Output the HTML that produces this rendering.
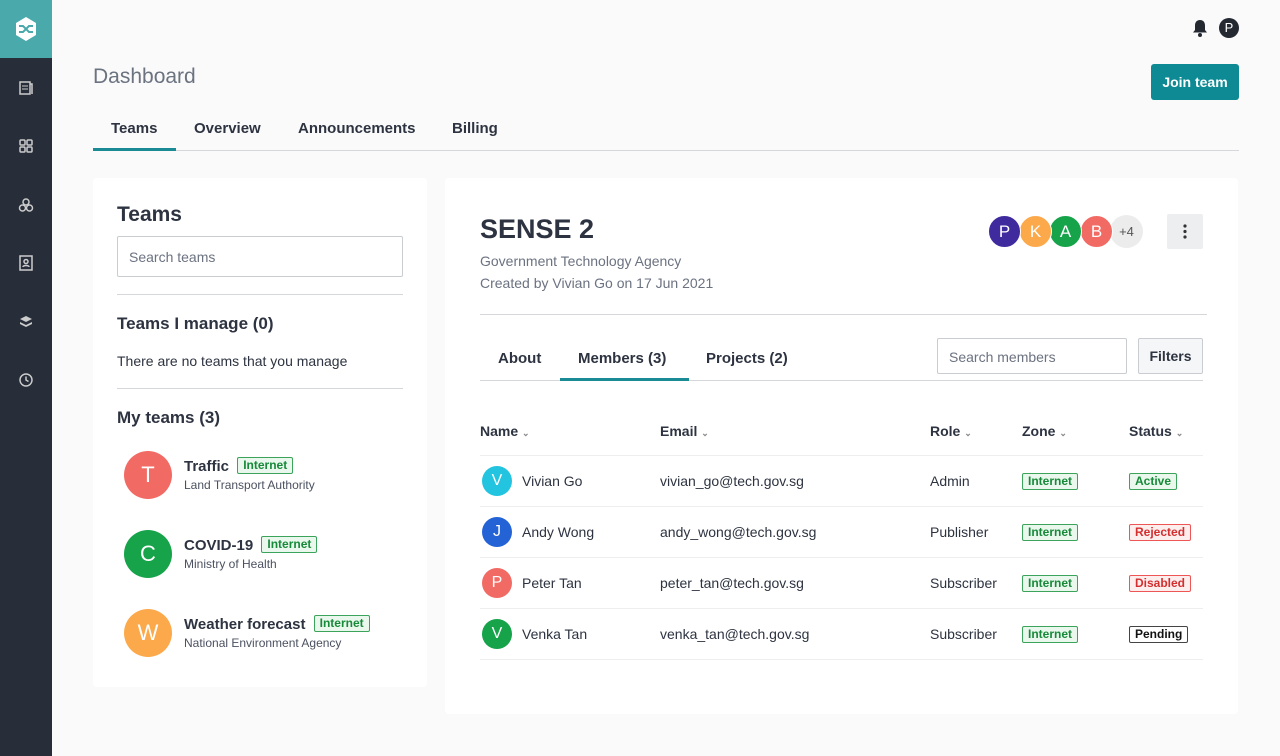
<!DOCTYPE html>
<html><head><meta charset="utf-8"><style>
*{box-sizing:border-box;margin:0;padding:0}
body{width:1280px;height:756px;background:#fafafa;font-family:"Liberation Sans",sans-serif;color:#2d3340;position:relative;overflow:hidden}
.abs{position:absolute}
.side{left:0;top:0;width:52px;height:756px;background:#272d39}
.logo{left:0;top:0;width:52px;height:58px;background:#4aa9ab}
.ic{left:17px;width:18px;height:18px}
.card{background:#fff;border-radius:4px}
.tag{display:inline-block;border:1px solid #3ba35a;background:#eaf7ec;color:#178a3a;font-size:12px;font-weight:bold;padding:0 5px;line-height:15px;border-radius:2px;vertical-align:2px}
.av{border-radius:50%;color:#fff;text-align:center}
.th{font-size:14px;font-weight:bold;color:#2d3340}
.row{position:absolute;left:480px;width:723px;height:51px;border-bottom:1px solid #eee}
.row span{position:absolute;top:17px;font-size:14px}
.row span.tag,.row span.st{font-size:12px;top:17px;vertical-align:0}
.st{font-size:12px;font-weight:bold;padding:0 5px;line-height:15px;border:1px solid;border-radius:2px}
</style></head><body>
<div class="abs side"></div>
<div class="abs logo"><svg width="52" height="58"><polygon points="26,17 36,23 36,35 26,41 16,35 16,23" fill="#fff"/><path d="M19 26h4l6 6h4M19 32h4l6-6h4" stroke="#4aa9ab" stroke-width="2" fill="none"/></svg></div>
<svg class="abs ic" style="top:79px" viewBox="0 0 18 18"><rect x="3" y="3" width="10" height="12" fill="none" stroke="#ccc" stroke-width="1.5"/><path d="M13 5h2v10" stroke="#ccc" stroke-width="1.5" fill="none"/><path d="M5 7h6M5 10h6" stroke="#ccc"/></svg>
<svg class="abs ic" style="top:137px" viewBox="0 0 18 18"><g fill="none" stroke="#ccc" stroke-width="1.5"><rect x="3" y="3" width="5" height="5" rx="1"/><rect x="10" y="3" width="5" height="5" rx="1"/><rect x="3" y="10" width="5" height="5" rx="1"/><rect x="10" y="10" width="5" height="5" rx="1"/></g></svg>
<svg class="abs ic" style="top:196px" viewBox="0 0 18 18"><g fill="none" stroke="#ccc" stroke-width="1.5"><circle cx="9" cy="6" r="3"/><circle cx="5.5" cy="12" r="3"/><circle cx="12.5" cy="12" r="3"/></g></svg>
<svg class="abs ic" style="top:254px" viewBox="0 0 18 18"><g fill="none" stroke="#ccc" stroke-width="1.5"><rect x="3" y="2" width="12" height="14"/><circle cx="9" cy="7.5" r="2"/><path d="M6 13c0-2 6-2 6 0"/></g></svg>
<svg class="abs ic" style="top:313px" viewBox="0 0 18 18"><g fill="#ccc"><path d="M9 3l6 3-6 3-6-3z"/><path d="M3 9l6 3 6-3v2l-6 3-6-3z"/></g></svg>
<svg class="abs ic" style="top:371px" viewBox="0 0 18 18"><g fill="none" stroke="#ccc" stroke-width="1.5"><circle cx="9" cy="9" r="6"/><path d="M9 5.5V9l2.5 1.5"/></g></svg>

<svg class="abs" style="left:1190px;top:18px" width="20" height="20" viewBox="0 0 20 20"><path d="M10 2c-3.5 0-5 2.5-5 5.5V12l-2 2.5h14L15 12V7.5C15 4.5 13.5 2 10 2z" fill="#232831"/><circle cx="10" cy="17" r="2" fill="#232831"/></svg>
<div class="abs av" style="left:1219px;top:18px;width:20px;height:20px;background:#232831;font-size:13px;line-height:20px">P</div>

<div class="abs" style="left:93px;top:65px;font-size:21px;color:#6b7280">Dashboard</div>
<div class="abs" style="left:1151px;top:64px;width:88px;height:36px;background:#0e8a94;border-radius:3px;color:#fff;font-size:14px;font-weight:bold;line-height:36px;text-align:center">Join team</div>
<div class="abs" style="left:93px;top:150px;width:1146px;height:1px;background:#d5d7db"></div>
<div class="abs" style="left:111px;top:120px;font-size:15px;font-weight:bold">Teams</div>
<div class="abs" style="left:93px;top:148px;width:83px;height:3px;background:#1a8a95"></div>
<div class="abs" style="left:194px;top:120px;font-size:15px;font-weight:bold">Overview</div>
<div class="abs" style="left:298px;top:120px;font-size:15px;font-weight:bold">Announcements</div>
<div class="abs" style="left:452px;top:120px;font-size:15px;font-weight:bold">Billing</div>

<div class="abs card" style="left:93px;top:178px;width:334px;height:509px"></div>
<div class="abs" style="left:117px;top:203px;font-size:21px;font-weight:bold">Teams</div>
<div class="abs" style="left:117px;top:236px;width:286px;height:41px;border:1px solid #c9ccd1;border-radius:2px;padding:12px 11px;font-size:14px;color:#6b7280">Search teams</div>
<div class="abs" style="left:117px;top:294px;width:286px;height:1px;background:#d5d7db"></div>
<div class="abs" style="left:117px;top:314px;font-size:17px;font-weight:bold">Teams I manage (0)</div>
<div class="abs" style="left:117px;top:353px;font-size:14px">There are no teams that you manage</div>
<div class="abs" style="left:117px;top:388px;width:286px;height:1px;background:#d5d7db"></div>
<div class="abs" style="left:117px;top:408px;font-size:17px;font-weight:bold">My teams (3)</div>
<div class="abs av" style="left:124px;top:451px;width:48px;height:48px;background:#f26a64;font-size:22px;line-height:48px">T</div>
<div class="abs" style="left:184px;top:457px;font-size:15px;font-weight:bold">Traffic <span class="tag" style="margin-left:4px">Internet</span></div>
<div class="abs" style="left:184px;top:478px;font-size:12px;color:#4b5160">Land Transport Authority</div>
<div class="abs av" style="left:124px;top:530px;width:48px;height:48px;background:#16a34a;font-size:22px;line-height:48px">C</div>
<div class="abs" style="left:184px;top:536px;font-size:15px;font-weight:bold">COVID-19 <span class="tag" style="margin-left:4px">Internet</span></div>
<div class="abs" style="left:184px;top:557px;font-size:12px;color:#4b5160">Ministry of Health</div>
<div class="abs av" style="left:124px;top:609px;width:48px;height:48px;background:#fba94b;font-size:22px;line-height:48px">W</div>
<div class="abs" style="left:184px;top:615px;font-size:15px;font-weight:bold">Weather forecast <span class="tag" style="margin-left:4px">Internet</span></div>
<div class="abs" style="left:184px;top:636px;font-size:12px;color:#4b5160">National Environment Agency</div>

<div class="abs card" style="left:445px;top:178px;width:793px;height:536px"></div>
<div class="abs" style="left:480px;top:214px;font-size:27px;font-weight:bold">SENSE 2</div>
<div class="abs" style="left:480px;top:253px;font-size:14px;color:#6b7280">Government Technology Agency</div>
<div class="abs" style="left:480px;top:275px;font-size:14px;color:#6b7280">Created by Vivian Go on 17 Jun 2021</div>
<div class="abs av" style="left:1110px;top:215px;width:33px;height:33px;background:#ececec;color:#555;font-size:13px;line-height:33px">+4</div>
<div class="abs av" style="left:1080px;top:215px;width:33px;height:33px;background:#f26a64;border:1px solid #fff;font-size:17px;line-height:31px">B</div>
<div class="abs av" style="left:1049px;top:215px;width:33px;height:33px;background:#16a34a;border:1px solid #fff;font-size:17px;line-height:31px">A</div>
<div class="abs av" style="left:1019px;top:215px;width:33px;height:33px;background:#fba94b;border:1px solid #fff;font-size:17px;line-height:31px">K</div>
<div class="abs av" style="left:988px;top:215px;width:33px;height:33px;background:#3f2a9e;border:1px solid #fff;font-size:17px;line-height:31px">P</div>
<div class="abs" style="left:1167px;top:214px;width:36px;height:35px;background:#eceef0;border-radius:2px"><svg width="36" height="35"><g fill="#333"><circle cx="18" cy="12" r="1.6"/><circle cx="18" cy="17.5" r="1.6"/><circle cx="18" cy="23" r="1.6"/></g></svg></div>
<div class="abs" style="left:480px;top:314px;width:727px;height:1px;background:#d5d7db"></div>
<div class="abs" style="left:480px;top:380px;width:723px;height:1px;background:#d5d7db"></div>
<div class="abs" style="left:498px;top:350px;font-size:15px;font-weight:bold">About</div>
<div class="abs" style="left:578px;top:350px;font-size:15px;font-weight:bold">Members (3)</div>
<div class="abs" style="left:560px;top:378px;width:129px;height:3px;background:#1a8a95"></div>
<div class="abs" style="left:706px;top:350px;font-size:15px;font-weight:bold">Projects (2)</div>
<div class="abs" style="left:937px;top:338px;width:190px;height:36px;border:1px solid #c9ccd1;border-radius:2px;padding:10px 11px;font-size:14px;color:#6b7280">Search members</div>
<div class="abs" style="left:1138px;top:338px;width:65px;height:36px;border:1px solid #c9ccd1;background:#f5f6f7;border-radius:2px;line-height:34px;text-align:center;font-size:14px;font-weight:bold">Filters</div>

<div class="abs th" style="left:480px;top:423px">Name <span style="font-size:9px;color:#888">⌄</span></div>
<div class="abs th" style="left:660px;top:423px">Email <span style="font-size:9px;color:#888">⌄</span></div>
<div class="abs th" style="left:930px;top:423px">Role <span style="font-size:9px;color:#888">⌄</span></div>
<div class="abs th" style="left:1022px;top:423px">Zone <span style="font-size:9px;color:#888">⌄</span></div>
<div class="abs th" style="left:1129px;top:423px">Status <span style="font-size:9px;color:#888">⌄</span></div>
<div class="abs" style="left:480px;top:455px;width:723px;height:1px;background:#eee"></div>

<div class="row" style="top:456px"><div class="abs av" style="left:2px;top:10px;width:30px;height:30px;background:#22c4df;font-size:16px;line-height:30px">V</div><span style="left:42px">Vivian Go</span><span style="left:180px">vivian_go@tech.gov.sg</span><span style="left:450px">Admin</span><span class="tag" style="left:542px">Internet</span><span class="st" style="left:649px;color:#178a3a;border-color:#3ba35a;background:#eaf7ec">Active</span></div>
<div class="row" style="top:507px"><div class="abs av" style="left:2px;top:10px;width:30px;height:30px;background:#2463d6;font-size:16px;line-height:30px">J</div><span style="left:42px">Andy Wong</span><span style="left:180px">andy_wong@tech.gov.sg</span><span style="left:450px">Publisher</span><span class="tag" style="left:542px">Internet</span><span class="st" style="left:649px;color:#d32f2f;border-color:#e55;background:#fdeeee">Rejected</span></div>
<div class="row" style="top:558px"><div class="abs av" style="left:2px;top:10px;width:30px;height:30px;background:#f26a64;font-size:16px;line-height:30px">P</div><span style="left:42px">Peter Tan</span><span style="left:180px">peter_tan@tech.gov.sg</span><span style="left:450px">Subscriber</span><span class="tag" style="left:542px">Internet</span><span class="st" style="left:649px;color:#d32f2f;border-color:#e55;background:#fdeeee">Disabled</span></div>
<div class="row" style="top:609px"><div class="abs av" style="left:2px;top:10px;width:30px;height:30px;background:#16a34a;font-size:16px;line-height:30px">V</div><span style="left:42px">Venka Tan</span><span style="left:180px">venka_tan@tech.gov.sg</span><span style="left:450px">Subscriber</span><span class="tag" style="left:542px">Internet</span><span class="st" style="left:649px;color:#111;border-color:#444;background:#fff">Pending</span></div>
</body></html>
